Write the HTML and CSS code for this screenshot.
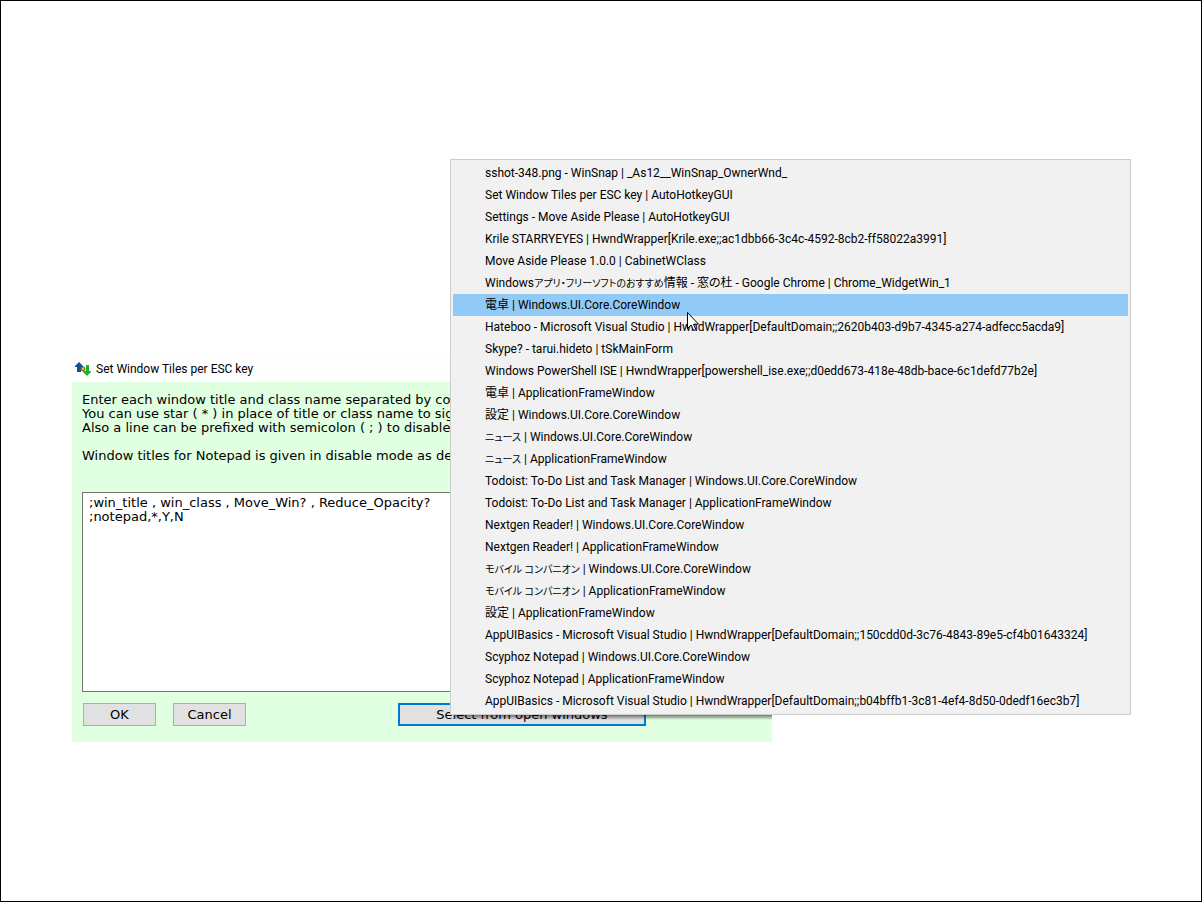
FILE: index.html
```html
<!DOCTYPE html>
<html lang="en">
  <head>
    <meta charset="UTF-8" />
    <title>Set Window Tiles per ESC key</title>
    <link rel="stylesheet" href="styles.css">
  </head>

  <body>
    <main class="desktop">
      <section class="dialog">
        <header class="titlebar">
          <svg class="app-icon" width="16" height="16" viewBox="0 0 16 16">
            <path d="M4 1L0 5v1h2v5h4V6h2V5z" fill="#12508f" />
            <path d="M11 4h3v6h2v1l-4 4-4-4v-1h3z" fill="#12b52b" />
            <circle cx="8" cy="8" r="2" fill="#efb02c" stroke="#75551c" />
          </svg>
          <h1 class="title">Set Window Tiles per ESC key</h1>
        </header>
        <form class="dialog-body">
          <label class="help" for="rules">Enter each window title and class name separated by comma
You can use star ( * ) in place of title or class name to signify
Also a line can be prefixed with semicolon ( ; ) to disable it

Window titles for Notepad is given in disable mode as default</label>
          <textarea id="rules" class="rules" spellcheck="false">;win_title , win_class , Move_Win? , Reduce_Opacity?
;notepad,*,Y,N</textarea>
          <div class="buttons">
            <button type="button" class="btn">OK</button>
            <button type="button" class="btn">Cancel</button>
            <button type="button" class="btn btn-select">Select from open windows</button>
          </div>
        </form>
        <div class="menu-shadow"></div>
      </section>

      <ul class="menu" role="menu">
        <li><button type="button" class="item" role="menuitem">sshot-348.png - WinSnap | _As12__WinSnap_OwnerWnd_</button></li>
        <li><button type="button" class="item" role="menuitem">Set Window Tiles per ESC key | AutoHotkeyGUI</button></li>
        <li><button type="button" class="item" role="menuitem">Settings - Move Aside Please | AutoHotkeyGUI</button></li>
        <li><button type="button" class="item" role="menuitem">Krile STARRYEYES | HwndWrapper[Krile.exe;;ac1dbb66-3c4c-4592-8cb2-ff58022a3991]</button></li>
        <li><button type="button" class="item" role="menuitem">Move Aside Please 1.0.0 | CabinetWClass</button></li>
        <li><button type="button" class="item" role="menuitem">Windows<span class="kana">アプリ・フリーソフトのおすすめ</span>情報 - 窓の杜 - Google Chrome | Chrome_WidgetWin_1</button></li>
        <li><button type="button" class="item active" role="menuitem">電卓 | Windows.UI.Core.CoreWindow</button></li>
        <li><button type="button" class="item" role="menuitem">Hateboo - Microsoft Visual Studio | HwndWrapper[DefaultDomain;;2620b403-d9b7-4345-a274-adfecc5acda9]</button></li>
        <li><button type="button" class="item" role="menuitem">Skype? - tarui.hideto | tSkMainForm</button></li>
        <li><button type="button" class="item" role="menuitem">Windows PowerShell ISE | HwndWrapper[powershell_ise.exe;;d0edd673-418e-48db-bace-6c1defd77b2e]</button></li>
        <li><button type="button" class="item" role="menuitem">電卓 | ApplicationFrameWindow</button></li>
        <li><button type="button" class="item" role="menuitem">設定 | Windows.UI.Core.CoreWindow</button></li>
        <li><button type="button" class="item" role="menuitem"><span class="kana">ニュース</span> | Windows.UI.Core.CoreWindow</button></li>
        <li><button type="button" class="item" role="menuitem"><span class="kana">ニュース</span> | ApplicationFrameWindow</button></li>
        <li><button type="button" class="item" role="menuitem">Todoist: To-Do List and Task Manager | Windows.UI.Core.CoreWindow</button></li>
        <li><button type="button" class="item" role="menuitem">Todoist: To-Do List and Task Manager | ApplicationFrameWindow</button></li>
        <li><button type="button" class="item" role="menuitem">Nextgen Reader! | Windows.UI.Core.CoreWindow</button></li>
        <li><button type="button" class="item" role="menuitem">Nextgen Reader! | ApplicationFrameWindow</button></li>
        <li><button type="button" class="item" role="menuitem"><span class="kana">モバイル コンパニオン</span> | Windows.UI.Core.CoreWindow</button></li>
        <li><button type="button" class="item" role="menuitem"><span class="kana">モバイル コンパニオン</span> | ApplicationFrameWindow</button></li>
        <li><button type="button" class="item" role="menuitem">設定 | ApplicationFrameWindow</button></li>
        <li><button type="button" class="item" role="menuitem">AppUIBasics - Microsoft Visual Studio | HwndWrapper[DefaultDomain;;150cdd0d-3c76-4843-89e5-cf4b01643324]</button></li>
        <li><button type="button" class="item" role="menuitem">Scyphoz Notepad | Windows.UI.Core.CoreWindow</button></li>
        <li><button type="button" class="item" role="menuitem">Scyphoz Notepad | ApplicationFrameWindow</button></li>
        <li><button type="button" class="item" role="menuitem">AppUIBasics - Microsoft Visual Studio | HwndWrapper[DefaultDomain;;b04bffb1-3c81-4ef4-8d50-0dedf16ec3b7]</button></li>
      </ul>

      <svg class="pointer" width="12" height="19" viewBox="0 0 12 19">
        <path d="M.5.5v16l3.700-3.500 2.400 5.500 2.300-1-2.400-5.300h5z" fill="#fff" stroke="#000" />
      </svg>
    </main>
  </body>
</html>
```

FILE: styles.css
```css
* {
  box-sizing: border-box;
}

body {
  margin: 0;
  background: #fff;
}

.desktop {
  position: relative;
  min-height: 100vh;
  border: 1px solid #000;
  overflow: hidden;
}

/* dialog window */
.dialog {
  position: absolute;
  left: 71px;
  top: 354px;
  width: 700px;
  font: 13px/14px "DejaVu Sans", sans-serif;
  color: #000;
}

.titlebar {
  display: flex;
  align-items: center;
  gap: 5px;
  height: 27px;
  padding-left: 3px;
  background: #fefefe;
}

.title {
  margin: 0;
  font: 12px/16px Roboto, "Noto Sans CJK JP", sans-serif;
}

.dialog-body {
  display: flex;
  flex-direction: column;
  padding: 11px 10px 16px;
  background: #e1ffe1;
}

.help {
  height: 99px;
  white-space: pre;
}

.rules {
  height: 200px;
  padding: 3px 6px;
  border: 1px solid #6f776f;
  border-radius: 0;
  outline: 0;
  background: #fff;
  color: #000;
  font: inherit;
  resize: none;
}

.buttons {
  display: flex;
  gap: 17px;
  padding: 11px 1px 0;
}

.btn {
  width: 73px;
  height: 23px;
  padding: 0;
  border: 1px solid #adadad;
  background: #e1e1e1;
  color: #000;
  font: inherit;
}

.btn-select {
  width: 248px;
  margin-left: 135px;
  border: 2px solid #0078d7;
}

/* the popup only darkens the dialog below it */
.menu-shadow {
  position: absolute;
  left: 383px;
  right: 0;
  bottom: 22px;
  height: 5px;
  background: linear-gradient(rgba(0, 0, 0, 0.5), rgba(0, 0, 0, 0));
}

/* popup menu */
.menu {
  position: absolute;
  left: 449px;
  top: 158px;
  width: 681px;
  margin: 0;
  padding: 2px;
  border: 1px solid #ccc;
  background: #f1f1f1;
  list-style: none;
}

.item {
  display: block;
  width: 100%;
  height: 22px;
  padding: 0 0 0 32px;
  border: 0;
  background: none;
  color: #000;
  font: 12px/22px Roboto, "Noto Sans CJK JP", sans-serif;
  font-feature-settings: "palt";
  text-align: left;
  white-space: nowrap;
}

.active {
  background: #91c9f7;
}

.kana {
  font-size: 10px;
}

.pointer {
  position: absolute;
  left: 686px;
  top: 311px;
}
```
